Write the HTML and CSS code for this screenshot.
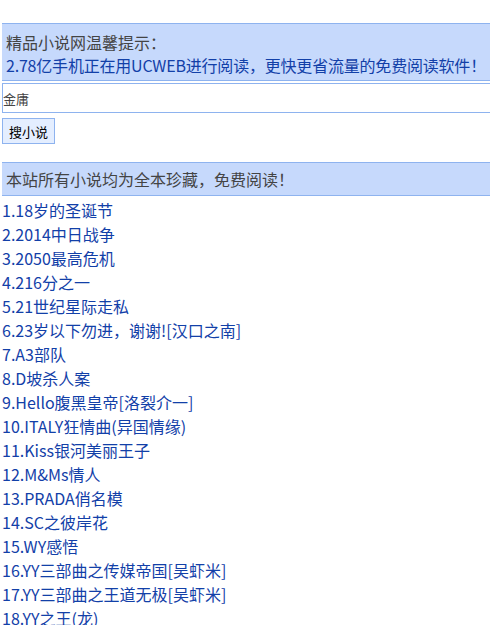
FILE: index.html
```html
<!DOCTYPE html>
<html lang="zh-CN">
<head>
<meta charset="utf-8">
<title>精品小说网</title>
<link rel="stylesheet" href="styles.css">
</head>
<body>
<div class="page">
  <div class="tip">
    <div class="tip-title">精品小说网温馨提示：</div>
    <a class="tip-link" href="#">2.78亿手机正在用UCWEB进行阅读，更快更省流量的免费阅读软件！</a>
  </div>
  <form class="search">
    <input class="search-input" type="text" value="金庸">
    <button class="search-btn" type="button">搜小说</button>
  </form>
  <div class="notice">本站所有小说均为全本珍藏，免费阅读！</div>
  <ul class="list">
    <li><a href="#">1.18岁的圣诞节</a></li>
    <li><a href="#">2.2014中日战争</a></li>
    <li><a href="#">3.2050最高危机</a></li>
    <li><a href="#">4.216分之一</a></li>
    <li><a href="#">5.21世纪星际走私</a></li>
    <li><a href="#">6.23岁以下勿进，谢谢![汉口之南]</a></li>
    <li><a href="#">7.A3部队</a></li>
    <li><a href="#">8.D坡杀人案</a></li>
    <li><a href="#">9.Hello腹黑皇帝[洛裂介一]</a></li>
    <li><a href="#">10.ITALY狂情曲(异国情缘)</a></li>
    <li><a href="#">11.Kiss银河美丽王子</a></li>
    <li><a href="#">12.M&amp;Ms情人</a></li>
    <li><a href="#">13.PRADA俏名模</a></li>
    <li><a href="#">14.SC之彼岸花</a></li>
    <li><a href="#">15.WY感悟</a></li>
    <li><a href="#">16.YY三部曲之传媒帝国[吴虾米]</a></li>
    <li><a href="#">17.YY三部曲之王道无极[吴虾米]</a></li>
    <li><a href="#">18.YY之王(龙)</a></li>
  </ul>
</div>
</body>
</html>
```
FILE: styles.css
```css
html, body {
  margin: 0;
  padding: 0;
  background: #fff;
  overflow-x: hidden;
}
body {
  font-family: "Noto Sans CJK SC", "Noto Sans", sans-serif;
  font-size: 16px;
  color: #444;
}
.page {
  padding: 23px 0 0 2px;
}
.tip {
  background: #c6d9fc;
  border-top: 1px solid #8eb3ef;
  border-bottom: 1px solid #8eb3ef;
  padding: 7px 4px 3px;
  line-height: 23px;
  white-space: nowrap;
  overflow: hidden;
}
.tip-title {
  color: #444;
}
.tip-link {
  color: #1240a8;
  text-decoration: none;
  letter-spacing: -0.2px;
}
.search {
  margin: 2px 0 0;
  display: flex;
  flex-direction: column;
  align-items: flex-start;
}
.search-input {
  box-sizing: border-box;
  width: calc(100% + 6px);
  height: 30px;
  margin: 0;
  border: 1px solid #8eb3ef;
  padding: 0;
  font-family: "Noto Sans CJK SC", sans-serif;
  font-size: 13px;
  color: #444;
  background: #fff;
  outline: none;
}
.search-btn {
  margin-top: 5px;
  box-sizing: border-box;
  width: 53px;
  height: 26px;
  padding: 0;
  border: 1px solid #8eb3ef;
  background: #e4eeff;
  font-family: "Noto Sans CJK SC", sans-serif;
  font-size: 13px;
  color: #000;
}
.notice {
  margin-top: 18px;
  background: #c6d9fc;
  border-top: 1px solid #8eb3ef;
  border-bottom: 1px solid #8eb3ef;
  padding: 5px 4px 4px;
  line-height: 23px;
  color: #444;
}
.list {
  list-style: none;
  margin: 2px 0 0;
  padding: 0;
  line-height: 24px;
}
.list a {
  color: #1240a8;
  text-decoration: none;
}
```
